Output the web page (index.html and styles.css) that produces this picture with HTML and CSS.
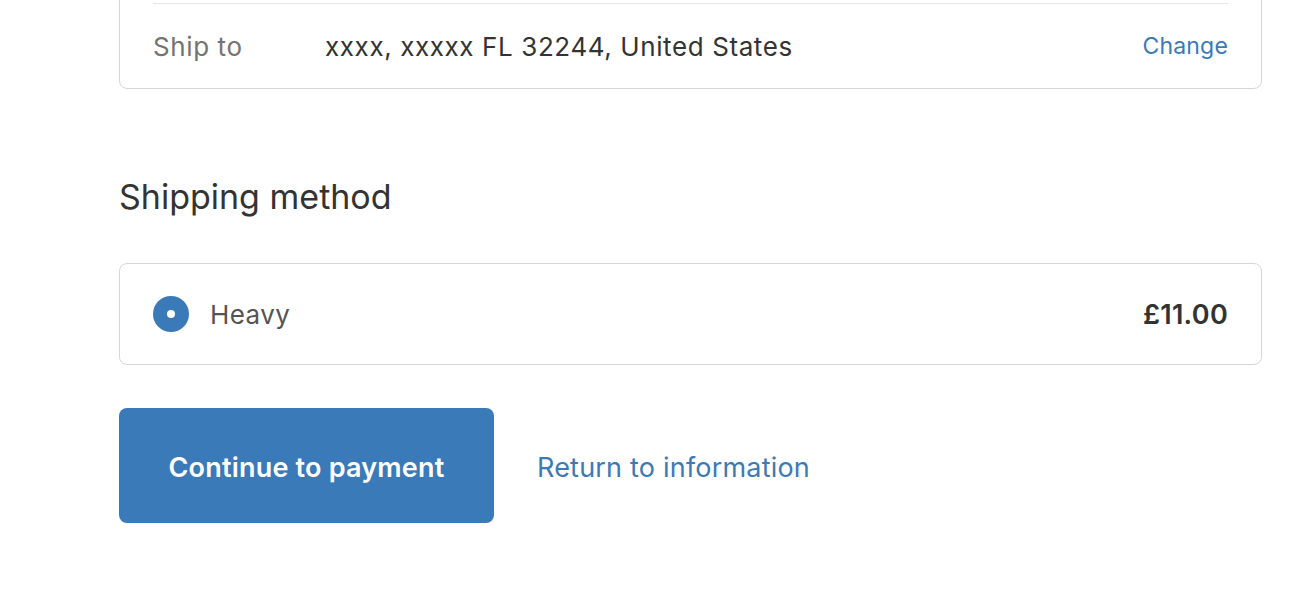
FILE: index.html
```html
<!DOCTYPE html>
<html>
<head>
	<meta charset="utf-8">
	<title>Shipping</title>
	<link rel="stylesheet" href="styles.css">
</head>
<body>
	<div class="main">
		<div class="review">
			<div class="review-row">
				<span class="review-label">Ship to</span>
				<span class="review-value">xxxx, xxxxx FL 32244, United States</span>
				<a class="review-link" href="#">Change</a>
			</div>
		</div>

		<h2 class="section-title">Shipping method</h2>

		<div class="methods">
			<label class="method">
				<span class="radio"></span>
				<span class="method-name">Heavy</span>
				<span class="method-price">£11.00</span>
			</label>
		</div>

		<div class="actions">
			<button class="btn" type="button">Continue to payment</button>
			<a class="step-link" href="#">Return to information</a>
		</div>
	</div>
</body>
</html>
```

FILE: styles.css
```css
* {
	padding: 0;
	margin: 0;
	box-sizing: border-box;
}
body {
	font-family: Inter, "Helvetica Neue", "Liberation Sans", sans-serif;
	color: #333;
	background: #fff;
}
a {
	text-decoration: none;
	color: #3a7ab8;
}
.main {
	width: 1143px;
	margin-left: 119px;
}

/* review block */
.review {
	margin-top: -10px;
	padding: 12px 33px 0;
	border: 1px solid #d6d6d6;
	border-radius: 8px;
}
.review-row {
	display: flex;
	align-items: center;
	height: 85px;
	border-top: 1px solid #e6e6e6;
	font-size: 26px;
	letter-spacing: 0.6px;
}
.review-label {
	width: 172px;
	color: #737373;
}
.review-value {
	flex: 1;
	color: #333;
}
.review-link {
	font-size: 23px;
	letter-spacing: 0.2px;
}

/* shipping method */
.section-title {
	margin-top: 87px;
	font-size: 34px;
	font-weight: 400;
	line-height: 41px;
	color: #333;
}
.methods {
	margin-top: 46px;
	border: 1px solid #d6d6d6;
	border-radius: 8px;
}
.method {
	display: flex;
	align-items: center;
	height: 100px;
	padding: 0 33px;
	font-size: 26px;
	letter-spacing: 0.4px;
}
.radio {
	width: 36px;
	height: 36px;
	border-radius: 50%;
	background: #3a7ab8;
	display: flex;
	align-items: center;
	justify-content: center;
}
.radio::after {
	content: '';
	width: 8px;
	height: 8px;
	border-radius: 50%;
	background: #fff;
}
.method-name {
	flex: 1;
	margin-left: 21px;
	color: #545454;
}
.method-price {
	font-size: 27px;
	font-weight: 600;
	letter-spacing: 0.3px;
	color: #333;
}

/* buttons */
.actions {
	display: flex;
	align-items: center;
	gap: 43px;
	margin-top: 43px;
}
.btn {
	width: 375px;
	height: 115px;
	padding-top: 4px;
	border: 0;
	border-radius: 8px;
	background: #3a7ab8;
	color: #fff;
	font-family: inherit;
	font-size: 27px;
	font-weight: 600;
	letter-spacing: 0.2px;
}
.step-link {
	padding-top: 4px;
	font-size: 27px;
	letter-spacing: 0.2px;
}
```
